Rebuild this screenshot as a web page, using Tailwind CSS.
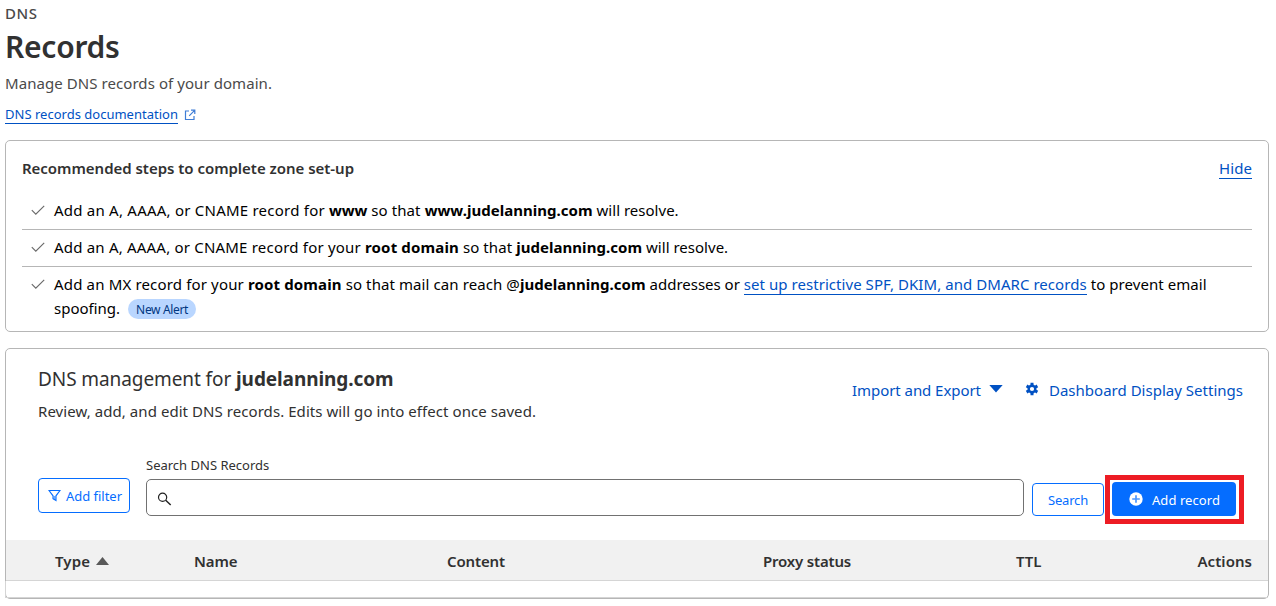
<!DOCTYPE html>
<html lang="en">
<head>
<meta charset="utf-8">
<title>DNS Records</title>
<script src="https://cdn.jsdelivr.net/npm/@tailwindcss/browser@4"></script>
</head>
<body class="h-[606px] overflow-hidden bg-white pl-[5px] font-['Noto_Sans','Open_Sans',sans-serif] text-[15px] leading-6 whitespace-nowrap text-[#313131]">
  <header class="h-[140px] pt-px text-[#4a4a4a]">
    <p class="font-medium tracking-[0.6px]">DNS</p>
    <h1 class="mt-px h-[42px] text-[30px] leading-[42px] font-semibold tracking-[-0.25px] text-[#313131]">Records</h1>
    <p class="mt-[3px] tracking-[0.067px]">Manage DNS records of your domain.</p>
    <p class="mt-[10px] flex items-center text-[13px] leading-[19px] text-[#0051c3]">
      <a class="h-[19px] border-b border-[#0051c3] tracking-[0.011px]">DNS records documentation</a>
      <svg class="ml-[6px] size-3" viewBox="0 0 12 12" fill="none" stroke="#3f7dd6" stroke-width="1.2"><path d="M5 2H1.5v8.5H10V7M7 1.2h3.8V5M10.6 1.4 5.2 6.8"/></svg>
    </p>
  </header>

  <section class="h-[192px] w-[1264px] rounded-[5px] border border-[#b6b6b6] px-4 pt-[15px]">
    <div class="flex items-start justify-between">
      <h2 class="font-semibold tracking-[-0.028px]">Recommended steps to complete zone set-up</h2>
      <a class="h-[23px] border-b border-[#0051c3] tracking-[0.08px] text-[#0051c3]">Hide</a>
    </div>
    <ul class="mt-[12px] text-black">
      <li class="flex h-[38px] items-start border-b border-[#b6b6b6] pt-[6px]">
        <svg class="mt-[6px] ml-[9px] mr-[9px] h-3 w-[14px]" viewBox="0 0 14 12" fill="none" stroke="#6a6a6a" stroke-width="1.15"><path d="m.8 6.2 4 4L13.2 1.8"/></svg>
        <p><span class="tracking-[0.229px]">Add an A, AAAA, or CNAME record for </span><b class="tracking-[-0.1px]">www</b><span class="tracking-[0.1px]"> so that </span><b class="tracking-[0.031px]">www.judelanning.com</b><span class="tracking-[0.015px]"> will resolve.</span></p>
      </li>
      <li class="flex h-[37px] items-start border-b border-[#b6b6b6] pt-[5px]">
        <svg class="mt-[6px] ml-[9px] mr-[9px] h-3 w-[14px]" viewBox="0 0 14 12" fill="none" stroke="#6a6a6a" stroke-width="1.15"><path d="m.8 6.2 4 4L13.2 1.8"/></svg>
        <p><span class="tracking-[0.199px]">Add an A, AAAA, or CNAME record for your </span><b class="tracking-[0.158px]">root domain</b><span class="tracking-[0.07px]"> so that </span><b class="tracking-[0.048px]">judelanning.com</b><span class="tracking-[0.015px]"> will resolve.</span></p>
      </li>
      <li class="flex items-start pt-[5px]">
        <svg class="mt-[6px] ml-[9px] mr-[9px] h-3 w-[14px]" viewBox="0 0 14 12" fill="none" stroke="#6a6a6a" stroke-width="1.15"><path d="m.8 6.2 4 4L13.2 1.8"/></svg>
        <div>
          <p><span class="tracking-[0.158px]">Add an MX record for your </span><b class="tracking-[0.13px]">root domain</b><span class="tracking-[0.09px]"> so that mail can reach @</span><b class="tracking-[0.03px]">judelanning.com</b><span class="tracking-[-0.01px]"> addresses or </span><a class="inline-block h-[23px] border-b border-[#0051c3] align-top tracking-[0.055px] text-[#0051c3]">set up restrictive SPF, DKIM, and DMARC records</a><span class="tracking-[0.066px]"> to prevent email</span></p>
          <p class="flex items-start"><span>spoofing.</span><span class="mt-[3px] ml-2 h-5 w-[68px] rounded-full bg-[#b9d6ff] text-center text-[12px] leading-[21px] tracking-[-0.336px] text-[#003681]">New Alert</span></p>
        </div>
      </li>
    </ul>
  </section>

  <section class="mt-4 flex h-[251px] w-[1264px] flex-col rounded-[5px] border border-[#b6b6b6]">
    <div class="flex items-start justify-between pt-[17px] pr-[25px] pl-8">
      <div>
        <h2 class="h-[26px] text-[19px] leading-[26px] tracking-[-0.09px]">DNS management for <b>judelanning.com</b></h2>
        <p class="mt-[7px] tracking-[0.061px]">Review, add, and edit DNS records. Edits will go into effect once saved.</p>
      </div>
      <div class="mt-[12px] flex items-center text-[#0051c3]">
        <span class="tracking-[-0.054px]">Import and Export</span>
        <svg class="mb-[3px] ml-[8px] h-2 w-[14px]" viewBox="0 0 14 8" fill="currentColor"><path d="M.3 0h13.4L7 7.5z"/></svg>
        <svg class="mb-[2px] ml-[22px] size-[14px]" viewBox="0 0 14 14" fill="none" stroke="currentColor"><circle cx="7" cy="7" r="3.3" stroke-width="2.4"/><path stroke-width="3" d="M7 .8v2.5M7 10.7v2.5M1.6 3.9l2.2 1.3M10.2 8.8l2.2 1.3M1.6 10.1l2.2-1.3M10.2 5.2l2.2-1.3"/></svg>
        <span class="ml-[10px] tracking-[0.012px]">Dashboard Display Settings</span>
      </div>
    </div>

    <div class="mt-[32px] flex h-[86px] items-start pl-8 text-[13px]">
      <button class="mt-[23px] flex h-[35px] w-[92px] items-center rounded-[4px] border border-[#056dff] pl-[9px] text-[#056dff]">
        <svg class="size-[13px]" viewBox="0 0 13 13" fill="none" stroke="currentColor" stroke-width="1.1"><path d="M1 1.5h11L8 6.8v4.7L5 9.8v-3z"/><path d="M6.5 7v3.5" stroke-opacity=".6" stroke-width="2"/></svg>
        <span class="ml-[5px] tracking-[-0.025px]">Add filter</span>
      </button>
      <div class="ml-4 w-[878px]">
        <label class="block h-[24px] leading-[21px]">Search DNS Records</label>
        <div class="h-[37px] rounded-[5px] border border-[#717171] pt-[12px] pl-[10px]">
          <svg class="size-[15px]" viewBox="0 0 15 15" fill="none" stroke="#222" stroke-width="1.2"><circle cx="5.6" cy="5.2" r="4.1"/><path stroke-width="1.5" d="m8.7 8.3 5 4.7"/></svg>
        </div>
      </div>
      <button class="mt-[28px] ml-2 h-[33px] w-[72px] rounded-[4px] border border-[#056dff] text-center tracking-[-0.19px] text-[#056dff]">Search</button>
      <div class="mt-[20px] ml-px h-[49px] w-[139px] border-[5px] border-[#ed1c24] py-[2px] pr-[3px] pl-[2px]">
        <button class="flex h-[34px] w-[124px] items-center rounded-[4px] bg-[#056dff] pt-px pl-[17px] text-white">
          <svg class="mb-[2px] size-[14px]" viewBox="0 0 14 14"><circle cx="7" cy="7" r="6.7" fill="#fff"/><path d="M7 3.2v7.6M3.2 7h7.6" stroke="#4b96ff" stroke-width="1.7"/></svg>
          <span class="mt-px ml-[9px] tracking-[0.067px]">Add record</span>
        </button>
      </div>
    </div>

    <div class="flex h-[41px] items-center border-b border-[#d5d5d5] bg-[#f1f1f1] pt-[2px] font-semibold">
      <span class="flex w-[188px] items-center pl-[49px] tracking-[0.095px]">Type
        <svg class="ml-[6px] h-[8px] w-[13px]" viewBox="0 0 13 8" fill="#595959"><path d="M0 8h13L6.5 0z"/></svg>
      </span>
      <span class="w-[253px] tracking-[-0.1px]">Name</span>
      <span class="w-[316px] tracking-[-0.13px]">Content</span>
      <span class="w-[253px] tracking-[-0.185px]">Proxy status</span>
      <span>TTL</span>
      <span class="ml-auto pr-4 tracking-[0.05px]">Actions</span>
    </div>
    <div class="-ml-px h-[17px] border-b border-l border-[#d5d5d5]"></div>
  </section>
</body>
</html>
